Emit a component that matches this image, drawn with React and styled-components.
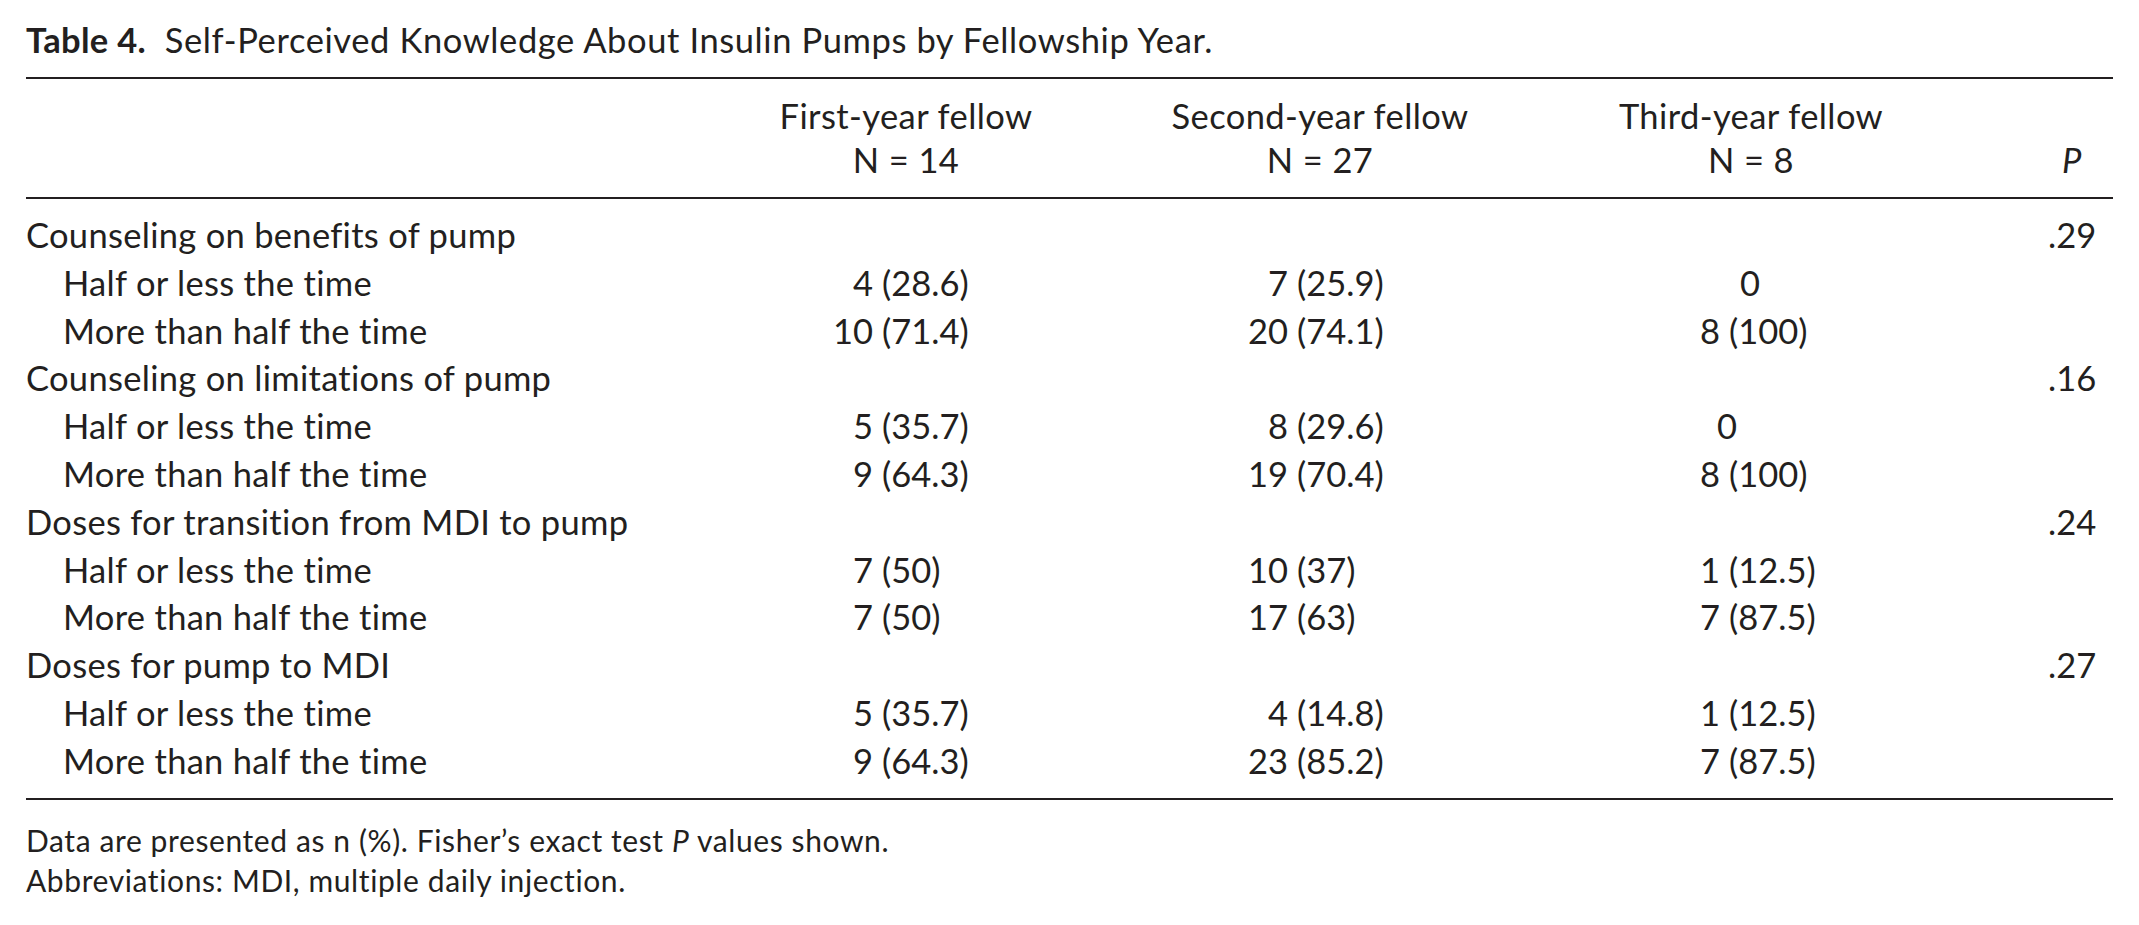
import React from "react";
import styled, { createGlobalStyle } from "styled-components";

const Global = createGlobalStyle`
  html, body { margin: 0; padding: 0; background: #ffffff; }
  body { font-family: Lato, "Open Sans", sans-serif; color: #231f20; }
`;

const Page = styled.div`
  padding: 20px 26px 0 26px;
  width: 2087px;
`;

const Caption = styled.div`
  font-size: 34.5px;
  letter-spacing: 0.6px;
  line-height: 40px;
  margin-bottom: 17px;
  white-space: pre;
`;

const CaptionLabel = styled.span`
  font-weight: 700;
  letter-spacing: 0.3px;
`;

const Table = styled.div`
  border-top: 2px solid #231f20;
  border-bottom: 2px solid #231f20;
`;

const cols = "730px 300px 528px 334px 195px";

const HeadRow = styled.div`
  display: grid;
  grid-template-columns: ${cols};
  padding: 15px 0 15px 0;
  border-bottom: 2px solid #231f20;
  font-size: 34.5px;
  letter-spacing: 0.4px;
  line-height: 44px;
`;

const HeadCell = styled.div`
  text-align: center;
  white-space: nowrap;
`;

const PHead = styled.div`
  align-self: end;
  padding-left: 144px;
  font-style: italic;
`;

const Body = styled.div`
  padding: 12px 0 13px 0;
`;

const Row = styled.div`
  display: grid;
  grid-template-columns: ${cols};
  height: 47.8px;
  font-size: 34.5px;
  letter-spacing: 0.3px;
  line-height: 47.8px;
  white-space: nowrap;
`;

const Label = styled.div`
  padding-left: ${(p) => (p.$sub ? 37 : 0)}px;
`;

const DataCell = styled.div`
  display: flex;
  padding-left: ${(p) => p.$indent}px;
  font-variant-numeric: tabular-nums;
  letter-spacing: 0;
`;

const Num = styled.span`
  width: 2.1ch;
  text-align: right;
  margin-right: 9px;
`;

const PValue = styled.div`
  padding-left: 130px;
  letter-spacing: 0;
`;

const Notes = styled.div`
  padding-top: 20px;
  font-size: 30px;
  letter-spacing: 0.6px;
  line-height: 40px;
`;

const colIndent = [75, 190, 94];

const groups = [
  {
    title: "Counseling on benefits of pump",
    p: ".29",
    rows: [
      ["Half or less the time", ["4", "(28.6)"], ["7", "(25.9)"], { zero: 156 }],
      ["More than half the time", ["10", "(71.4)"], ["20", "(74.1)"], ["8", "(100)"]],
    ],
  },
  {
    title: "Counseling on limitations of pump",
    p: ".16",
    rows: [
      ["Half or less the time", ["5", "(35.7)"], ["8", "(29.6)"], { zero: 133 }],
      ["More than half the time", ["9", "(64.3)"], ["19", "(70.4)"], ["8", "(100)"]],
    ],
  },
  {
    title: "Doses for transition from MDI to pump",
    p: ".24",
    rows: [
      ["Half or less the time", ["7", "(50)"], ["10", "(37)"], ["1", "(12.5)"]],
      ["More than half the time", ["7", "(50)"], ["17", "(63)"], ["7", "(87.5)"]],
    ],
  },
  {
    title: "Doses for pump to MDI",
    p: ".27",
    rows: [
      ["Half or less the time", ["5", "(35.7)"], ["4", "(14.8)"], ["1", "(12.5)"]],
      ["More than half the time", ["9", "(64.3)"], ["23", "(85.2)"], ["7", "(87.5)"]],
    ],
  },
];

function Value({ v, i }) {
  if (v && v.zero !== undefined) {
    return <DataCell $indent={v.zero}>0</DataCell>;
  }
  return (
    <DataCell $indent={colIndent[i]}>
      <Num>{v[0]}</Num>
      <span>{v[1]}</span>
    </DataCell>
  );
}

export default function App() {
  return (
    <>
      <Global />
      <Page>
        <Caption>
          <CaptionLabel>Table 4.</CaptionLabel>  Self-Perceived Knowledge About Insulin Pumps by Fellowship Year.
        </Caption>
        <Table>
          <HeadRow>
            <div />
            <HeadCell>
              First-year fellow
              <br />N = 14
            </HeadCell>
            <HeadCell>
              Second-year fellow
              <br />N = 27
            </HeadCell>
            <HeadCell>
              Third-year fellow
              <br />N = 8
            </HeadCell>
            <PHead>P</PHead>
          </HeadRow>
          <Body>
            {groups.map((g) => (
              <React.Fragment key={g.title}>
                <Row>
                  <Label>{g.title}</Label>
                  <div />
                  <div />
                  <div />
                  <PValue>{g.p}</PValue>
                </Row>
                {g.rows.map((r, idx) => (
                  <Row key={idx}>
                    <Label $sub>{r[0]}</Label>
                    <Value v={r[1]} i={0} />
                    <Value v={r[2]} i={1} />
                    <Value v={r[3]} i={2} />
                    <div />
                  </Row>
                ))}
              </React.Fragment>
            ))}
          </Body>
        </Table>
        <Notes>
          <div>
            Data are presented as n (%). Fisher’s exact test <i>P</i> values shown.
          </div>
          <div>Abbreviations: MDI, multiple daily injection.</div>
        </Notes>
      </Page>
    </>
  );
}
